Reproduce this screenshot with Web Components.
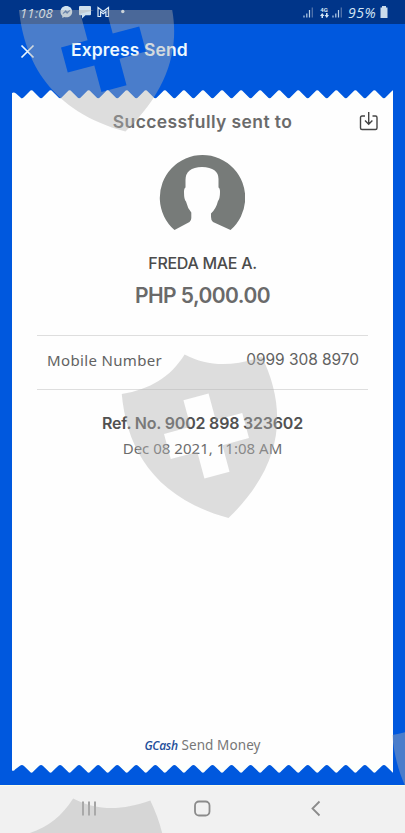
<!DOCTYPE html>
<html lang="en">
<head>
<meta charset="utf-8">
<title>Express Send</title>
<style>
html,body{margin:0;height:833px;overflow:hidden}
body{font-family:"Noto Sans","Liberation Sans",sans-serif}
</style>
</head>
<body>
<send-screen></send-screen>
<script>
const define = (name, html, setup) => customElements.define(name, class extends HTMLElement {
  constructor() {
    super();
    this.attachShadow({mode: 'open'}).innerHTML = html;
    if (setup) setup(this, this.shadowRoot);
  }
});

define('status-bar', `<style>
:host{display:flex;box-sizing:border-box;height:24px;padding:0 17px 0 20px;background:#003589;color:#d4e6f5;align-items:center;justify-content:space-between}
div{display:flex;align-items:center;height:24px}
.time{font:italic 400 13px "Open Sans",sans-serif;letter-spacing:.2px;width:34px;white-space:nowrap;margin-top:1px;color:#e6f2fb}
.pct{font:italic 14px "Open Sans",sans-serif;letter-spacing:.5px;width:30px;white-space:nowrap;margin-top:1px}
svg{display:block;flex:none}
.net{display:flex;flex-direction:column;align-items:center;justify-content:center;width:12px;height:14px;margin:0 2px 0 4px}
.net span{font:700 6px/7px Roboto,sans-serif}
</style>
<div><span class="time">11:08</span>
<svg width="74" height="14" viewBox="0 0 74 14" style="margin-left:6px">
<path d="M6.3 1C2.900 1 .500 3.400 .500 6.700c0 1.800.7 3.200 1.800 4.200V13l1.900-1c4.400 1.200 8-1.600 8-5.300C12.200 3.400 9.700 1 6.300 1z" fill="#d0e2ef"/>
<path d="M3 8.500l2.700-3 1.500 1.500 2.600-1.500L7.100 8.500 5.600 7z" fill="#315b9d" stroke="#315b9d" stroke-width=".7"/>
<path d="M20 1h10q1 0 1 1v7.200q0 1-1 1h-4.500L22 13.500V10.200h-2q-1 0-1-1V2q0-1 1-1z" fill="#cfe0ed"/>
<path d="M38 11.500V2.500l5.200 4 5.300-4v9h-2.600V6.800l-2.700 2-2.600-2v4.700z" fill="none" stroke="#dcebf5" stroke-width="1.200"/>
<circle cx="62.800" cy="6.500" r="1.700" fill="#dcebf5"/></svg></div>
<div><svg width="11" height="12"><path d="M1 9.500v2M3.800 7.500v4M6.500 4v7.500" stroke="#b7d0e9" stroke-width="1.200"/><path d="M9.300 1.500v10" stroke="#5778ad" stroke-width="1.200"/></svg>
<div class="net"><span>4G</span><svg width="9" height="5"><path d="M0 3L2.200 0l2.200 3H3v2H1.500V3zM4.600 2L6.800 5 9 2H7.600V0H6v2z" fill="#d4e6f5"/></svg></div>
<svg width="11" height="12"><path d="M1 9.500v2M3.800 7.500v4M6.500 4v7.500" stroke="#b7d0e9" stroke-width="1.200"/><path d="M9.300 1.500v10" stroke="#5778ad" stroke-width="1.200"/></svg>
<span class="pct" style="margin-left:5px">95%</span>
<svg width="8" height="12" style="margin-left:2px"><path d="M2 0h4v1.500h1.500V12H.5V1.500H2z" fill="#cbdcec"/></svg></div>`);

define('title-bar', `<style>
:host{display:flex;height:66px;color:#edf9ff;align-items:flex-start}
svg{margin:20px 0 0 20px;flex:none}
span{margin:13px 0 0 36px;font:600 17.500px/25px Inter,sans-serif;letter-spacing:.12px;white-space:nowrap}
</style><svg width="15" height="15"><path d="M1.500 1.500l12 12M13.500 1.500l-12 12" stroke="#e8f5ff" stroke-width="1.700"/></svg><span><slot></slot></span>`);

define('torn-edge', `<style>:host{display:block;height:9px}svg{display:block}</style><svg width="381" height="9"><path fill="#fdfffc"/></svg>`,
(host, root) => {
  const bottom = host.hasAttribute('bottom');
  let d = bottom ? 'M0 0V5.500Q2 6.500 3 4.500L8 .8' : 'M0 9V3Q2 2 4 3.500L8.500 7.500';
  for (let x = 10; x < 381; x += 19.050) {
    d += bottom
      ? `Q${x} -.8 ${x+2} 1L${x+7.200} 6Q${x+9.500} 9.400 ${x+11.800} 6L${x+17} 1`
      : `Q${x} 9.400 ${x+2} 7L${x+7.500} 1.500Q${x+9.500} -1.200 ${x+11.500} 1.500L${x+17} 7`;
  }
  d += bottom ? 'L400 0Z' : 'L400 9Z';
  root.querySelector('path').setAttribute('d', d);
});

define('user-avatar', `<style>:host{display:block;width:86px;height:77px}svg{display:block}</style>
<svg width="86" height="77" viewBox="0 0 86 77"><path fill="#777b79" d="M15.500 76A42.700 42.700 0 1 1 71.500 76L54 68Q51.800 66.500 52 62V59.500Q57 55 59 47Q61 44.500 61 38Q61 34 59.500 33.500V25Q59.500 13.500 43 13Q26.500 13.500 26.500 26V33.500Q25 34 25 38Q25 46 27 47.500Q28.500 54 32.300 58.500V63.500Q32.500 66.500 30.500 68Z"/></svg>`);

define('detail-row', `<style>
:host{display:flex;box-sizing:border-box;height:55px;margin:0 25px 0 25px;padding:0 9px 6px 10px;border-top:1px solid #dedede;border-bottom:1px solid #dedede;justify-content:space-between;align-items:center;font:15px/20px "Noto Sans",sans-serif;color:#626262}
span{white-space:nowrap}
.l{letter-spacing:.35px}.v{font:15.500px/20px Inter,sans-serif;letter-spacing:-.05px}
</style><span class="l"><slot name="label"></slot></span><span class="v"><slot></slot></span>`);

define('receipt-card', `<style>
:host{display:flex;flex-direction:column;width:381px;height:684px;margin-left:12px}
main{flex:1;background:#fefefe;display:flex;flex-direction:column;position:relative}
.c{text-align:center;white-space:nowrap}
.head{margin-top:11px;font:600 17.500px/24px Inter,sans-serif;letter-spacing:.4px;color:#6b6b6b}
.dl{position:absolute;right:14px;top:12px}
user-avatar{margin:20px 0 0 147px}
.name{margin-top:20px;font:500 16px/24px Inter,sans-serif;letter-spacing:-.3px;color:#4b4b4b}
.amt{margin-top:6px;font:600 21px/30px Inter,sans-serif;letter-spacing:-.55px;color:#6a6a6a}
detail-row{margin-top:24px}
.ref{margin-top:21px;font:600 16px/24px Inter,sans-serif;letter-spacing:-.2px;color:#515151}
.date{margin-top:1px;font:15px/24px "Noto Sans",sans-serif;letter-spacing:.02px;color:#6c6c6c}
.foot{margin-top:auto;margin-bottom:9px;font:13.500px/22px "Noto Sans",sans-serif;color:#777;letter-spacing:.1px}
.foot i{font:italic 600 12px "Open Sans",sans-serif;color:#1f4f9b;letter-spacing:-.3px}
</style><torn-edge></torn-edge><main>
<svg class="dl" width="20" height="22" viewBox="0 0 20 22" fill="none" stroke="#444" stroke-width="1.400"><path d="M6 5H3Q1.500 5 1.500 6.500v10.500Q1.500 18.500 3 18.500H16.500Q18 18.500 18 17v-10.500Q18 5 16.500 5h-3M9.700 1V13M6 9.500l3.700 3.700L13.400 9.500"/></svg>
<div class="c head"><span>Successfully sent to</span></div>
<user-avatar></user-avatar>
<div class="c name"><span>FREDA MAE A.</span></div>
<div class="c amt"><span>PHP 5,000.00</span></div>
<detail-row><span slot="label">Mobile Number</span>0999 308 8970</detail-row>
<div class="c ref"><span>Ref. No. 9002 898 323602</span></div>
<div class="c date"><span>Dec 08 2021, 11:08 AM</span></div>
<div class="c foot"><i>GCash</i> <span>Send Money</span></div>
</main><torn-edge bottom></torn-edge>`);

define('nav-bar', `<style>
:host{display:flex;height:48px;margin-top:auto;background:#f1f1f1;border-top:1px solid #fcfde8;align-items:center;box-sizing:border-box}
svg{display:block}
</style><svg width="405" height="46" fill="none" stroke="#8b8b8b" stroke-width="1.800"><path d="M83 14.500v14M89 14.500v14M95 14.500v14" stroke-width="1.500"/><rect x="195" y="14.500" width="14.500" height="14" rx="4"/><path d="M319.500 14.500L312.500 21.500l7 7"/></svg>`);

define('shield-marks', `<style>:host{position:absolute;inset:0;pointer-events:none}svg{display:block}</style>
<svg width="405" height="833"><defs><path id="s" fill-rule="evenodd" d="M0-84.500C-20-66-42-60-71-62.500C-80-10-68 45 0 85C72 45 84-10 74-62.500C44-60 20-66 0-84.500ZM-13-40.500H13V-13H40.500V13H13V40.500H-13V13H-40.500V-13H-13Z"/><clipPath id="k"><path d="M0 10H405V833H0Z"/></clipPath></defs>
<g fill="#b1b1b1" fill-opacity=".42" clip-path="url(#k)">
<use href="#s" transform="translate(103.500 49.500) rotate(-15)"/>
<use href="#s" transform="translate(206.500 436) rotate(-15)"/>
<use href="#s" transform="translate(95 880) rotate(-15)"/>
<use href="#s" transform="translate(477 777) rotate(-15)"/></g></svg>`);

define('send-screen', `<style>
:host{display:flex;flex-direction:column;position:relative;width:405px;height:833px;background:#0058de;overflow:hidden}
</style><status-bar></status-bar><title-bar>Express Send</title-bar><receipt-card></receipt-card><nav-bar></nav-bar><shield-marks></shield-marks>`);
</script>
</body>
</html>
